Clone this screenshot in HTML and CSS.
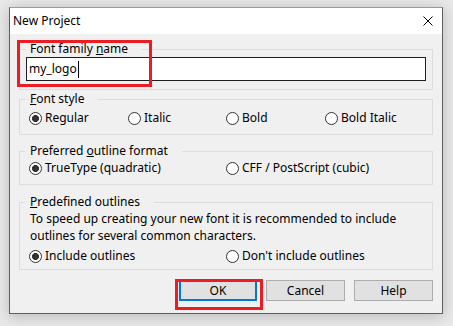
FILE: index.html
```html
<!DOCTYPE html>
<html lang="en">
<head>
  <meta charset="UTF-8">
  <title>New Project</title>
  <link rel="stylesheet" href="styles.css">
</head>
<body>

  <div class="dialog">
    <div class="titlebar">
      <span class="title">New Project</span>
      <svg class="close" width="10" height="10" viewBox="0 0 10 10">
        <path d="M0.5 0.5 L9.5 9.5 M9.5 0.5 L0.5 9.5" stroke="#000" stroke-width="1" fill="none"/>
      </svg>
    </div>

    <div class="content">
      <div class="group group-name">
        <div class="legend">Font family <u>n</u>ame</div>
        <div class="textbox">my_logo<span class="caret"></span></div>
      </div>

      <div class="group group-style">
        <div class="legend"><u>F</u>ont style</div>
        <div class="radios cols-4">
          <label class="radio"><span class="dot checked"></span>Regular</label>
          <label class="radio"><span class="dot"></span>Italic</label>
          <label class="radio"><span class="dot"></span>Bold</label>
          <label class="radio"><span class="dot"></span>Bold Italic</label>
        </div>
      </div>

      <div class="group group-format">
        <div class="legend">Preferred <u>o</u>utline format</div>
        <div class="radios cols-2">
          <label class="radio"><span class="dot checked"></span>TrueType (quadratic)</label>
          <label class="radio"><span class="dot"></span>CFF / PostScript (cubic)</label>
        </div>
      </div>

      <div class="group group-outlines">
        <div class="legend"><u>P</u>redefined outlines</div>
        <p class="note">To speed up creating your new font it is recommended to include outlines for several common characters.</p>
        <div class="radios cols-2">
          <label class="radio"><span class="dot checked"></span>Include outlines</label>
          <label class="radio"><span class="dot"></span>Don't include outlines</label>
        </div>
      </div>

      <div class="buttons">
        <button class="btn default">OK</button>
        <button class="btn">Cancel</button>
        <button class="btn">Help</button>
      </div>
    </div>
  </div>

  <!-- annotation marks -->
  <div class="mark mark-name"></div>
  <div class="mark mark-ok"></div>

</body>
</html>
```

FILE: styles.css
```css
html, body {
  margin: 0;
  padding: 0;
  height: 100%;
}

body {
  background: #e9e9e9;
  font-family: 'Noto Sans', 'Open Sans', sans-serif;
  font-size: 12px;
  color: #000;
  position: relative;
  overflow: hidden;
}

.dialog {
  margin: 7px 0 0 9px;
  width: 434px;
  height: 307px;
  box-sizing: border-box;
  border: 1px solid #5f5f5f;
  border-top-color: #9a9a9a;
  background: #f0f0f0;
  box-shadow: 0 2px 14px rgba(0, 0, 0, 0.22);
  display: flex;
  flex-direction: column;
}

.titlebar {
  background: #fff;
  height: 26px;
  display: flex;
  align-items: center;
  justify-content: space-between;
  padding: 0 9px 0 3px;
}

.title {
  font-size: 12px;
  line-height: 16px;
}

.content {
  padding: 15px 9px 0 9px;
}

/* group boxes */
.group {
  border: 1px solid #dcdcdc;
  padding: 0 6px 8px 6px;
}

.legend {
  margin: -9px 0 0 -1px;
  padding: 0 14px 0 5px;
  width: fit-content;
  line-height: 16px;
  background: #f0f0f0;
}

.group-style { margin-top: 9px; }
.group-format { margin-top: 16px; }
.group-outlines { margin-top: 17px; padding-bottom: 5px; }

.textbox {
  height: 24px;
  box-sizing: border-box;
  border: 1px solid #1e1e1e;
  background: #fff;
  padding: 0 2px;
  line-height: 22px;
  display: flex;
  align-items: center;
}

.caret {
  display: inline-block;
  width: 1px;
  height: 17px;
  background: #000;
  margin-left: 1px;
}

/* radio buttons */
.radios {
  display: grid;
  padding-left: 3px;
  line-height: 16px;
}

.cols-4 {
  grid-template-columns: 99px 98px 99px auto;
  margin-top: 3px;
}

.cols-2 {
  grid-template-columns: 197px auto;
}

.group-format .radios { margin-top: 1px; }
.group-outlines .radios { margin-top: 4px; }

.radio {
  display: flex;
  align-items: center;
  white-space: nowrap;
}

.dot {
  width: 13px;
  height: 13px;
  box-sizing: border-box;
  border: 1px solid #333;
  border-radius: 50%;
  background: #fff;
  margin-right: 3px;
  flex: none;
}

.dot.checked {
  background: radial-gradient(circle, #333 3.2px, #fff 3.8px);
}

.note {
  margin: 1px 0 0 4px;
  line-height: 16.5px;
}

/* buttons */
.buttons {
  display: flex;
  justify-content: flex-end;
  gap: 9px;
  margin-top: 10px;
}

.btn {
  width: 79px;
  height: 21px;
  box-sizing: border-box;
  background: #e1e1e1;
  border: 1px solid #adadad;
  font-family: inherit;
  font-size: 12px;
  color: #000;
  padding: 0;
}

.btn.default {
  border: 2px solid #0078d7;
  width: 78px;
}

/* red annotation boxes */
.mark {
  position: absolute;
  border: 3px solid #ec1c24;
  box-sizing: border-box;
}

.mark-name {
  left: 17px;
  top: 40px;
  width: 135px;
  height: 47px;
}

.mark-ok {
  left: 175px;
  top: 279px;
  width: 88px;
  height: 31px;
}
```
